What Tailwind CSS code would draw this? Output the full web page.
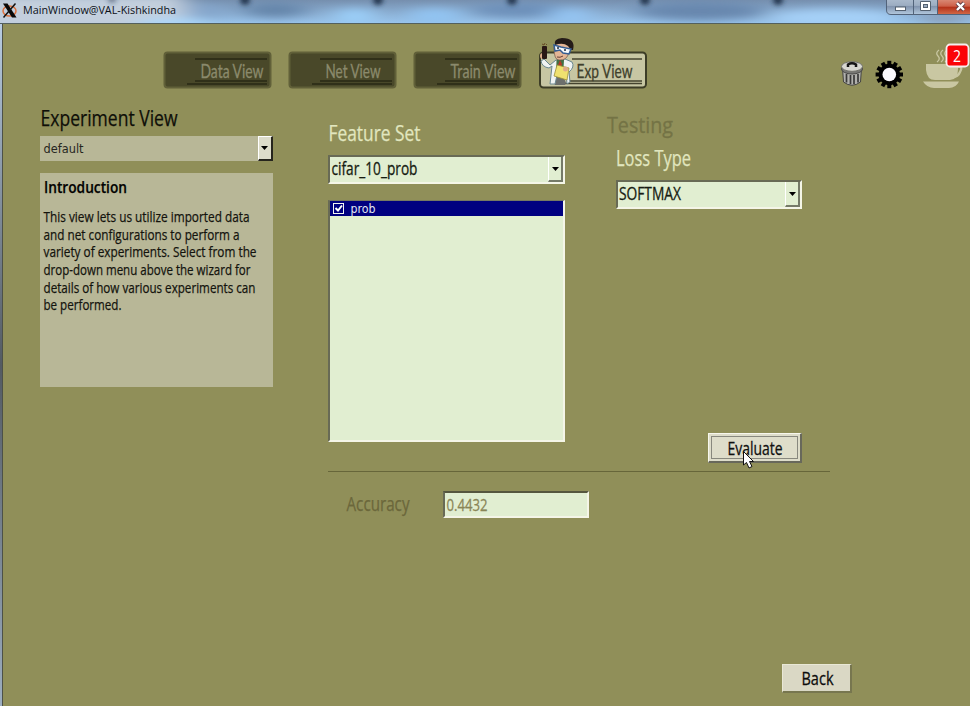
<!DOCTYPE html>
<html lang="en">
<head>
<meta charset="utf-8">
<title>MainWindow@VAL-Kishkindha</title>
<script src="https://cdn.jsdelivr.net/npm/@tailwindcss/browser@4"></script>
</head>
<body class="w-[970px] h-[706px] overflow-hidden">
<div class="flex flex-col w-[970px] h-[706px] overflow-hidden bg-[#908f59] font-['Open_Sans',sans-serif]">
  <!-- title bar -->
  <header class="relative flex justify-between h-[24px] shrink-0 overflow-hidden bg-linear-to-b from-[#768fae] to-[#9bc7ef]">
    <svg class="absolute inset-0" width="970" height="24">
      <defs><filter id="b" x="-50%" y="-100%" width="200%" height="300%"><feGaussianBlur stdDeviation="12 4"/></filter><filter id="s" x="-50%" y="-100%" width="200%" height="300%"><feGaussianBlur stdDeviation="2.5"/></filter></defs>
      <g filter="url(#b)">
        <rect x="-20" y="-5" width="205" height="34" fill="#c3cfdd"/>
        <ellipse cx="205" cy="12" rx="18" ry="8" fill="#84a5cb"/>
        <ellipse cx="175" cy="24" rx="40" ry="6" fill="#acd8fb"/>
        <ellipse cx="275" cy="10" rx="32" ry="7" fill="#6484a9"/>
        <ellipse cx="355" cy="16" rx="20" ry="8" fill="#9bd0fa"/>
        <ellipse cx="435" cy="16" rx="28" ry="8" fill="#92c4f2"/>
        <ellipse cx="520" cy="10" rx="50" ry="7" fill="#6c8fb9"/>
        <ellipse cx="570" cy="16" rx="22" ry="8" fill="#94c5f3"/>
        <ellipse cx="700" cy="11" rx="65" ry="9" fill="#6887ae"/>
        <ellipse cx="835" cy="18" rx="65" ry="9" fill="#a5d0f7"/>
        <ellipse cx="945" cy="19" rx="25" ry="4" fill="#8795ab"/>
      </g>
      <g filter="url(#s)" fill="#20344d"><circle cx="112" cy="-1" r="4" opacity=".5"/><circle cx="245" cy="0" r="5"/><circle cx="378" cy="0" r="5"/><circle cx="512" cy="0" r="5"/><circle cx="645" cy="0" r="5"/><circle cx="778" cy="0" r="5"/></g>
      <path d="M0 23.500H970" stroke="#53605e"/>
    </svg>
    <div class="relative flex">
      <svg width="20" height="22"><ellipse cx="9.500" cy="11" rx="6.500" ry="5" fill="none" stroke="#dc713d" stroke-width="1.500"/><path d="M3 3.500H7.500L16.500 17.500H12Z" fill="#090909"/><path d="M15.500 3.500L3.500 17.500" stroke="#111" stroke-width="1.500"/></svg>
      <svg width="180" height="22"><text x="3" y="14" font-size="11.500" fill="#0b1017" textLength="153" lengthAdjust="spacingAndGlyphs">MainWindow@VAL-Kishkindha</text></svg>
    </div>
    <svg class="relative" width="84" height="17">
      <defs><linearGradient id="g" x2="0" y2="1"><stop stop-color="#aebdcf"/><stop offset=".45" stop-color="#9cadc2"/><stop offset=".5" stop-color="#8193ad"/><stop offset="1" stop-color="#b3c9de"/></linearGradient><linearGradient id="r" x2="0" y2="1"><stop stop-color="#d88773"/><stop offset=".45" stop-color="#cd5f48"/><stop offset=".5" stop-color="#b32f18"/><stop offset="1" stop-color="#d06645"/></linearGradient></defs>
      <path d="M.5 -2V10Q.5 14.500 5 14.500H84V-2Z" fill="url(#g)" stroke="#52637a"/>
      <path d="M52 0H84V14H52Z" fill="url(#r)"/><path d="M27.500 0V14M51.500 0V14" stroke="#52637a"/>
      <rect x="9.500" y="7" width="10" height="3.500" fill="#fff" stroke="#53606f"/>
      <path d="M34.500 1.500H44.500V10.500H34.500Z" fill="#fff" stroke="#53606f"/><rect x="37.500" y="4.500" width="4" height="3" fill="#9aaabe" stroke="#53606f"/>
      <path d="M71 3L78 10M78 3L71 10" stroke="#5f3840" stroke-width="4"/><path d="M71 3L78 10M78 3L71 10" stroke="#fff" stroke-width="2.400"/>
    </svg>
  </header>

  <div class="flex flex-1 min-h-0">
    <div class="w-[3px] shrink-0 bg-linear-to-b from-[#b9cde3] via-[#535a62] to-[#9daec0] border-r border-[#4d5148]"></div>
    <div class="flex flex-col flex-1 min-w-0">
      <!-- view tabs -->
      <nav class="flex h-[72px] shrink-0 pl-[160px] pt-[14px] font-['Lato',sans-serif]">
        <svg class="mr-[15px] shrink-0" width="110" height="54"><rect x="1.500" y="14.500" width="106" height="35" rx="3" fill="#494829" stroke="#616039" stroke-width="2"/><path d="M32 21H104M32 43H104M24 46H104" stroke="#292815" stroke-width="1.500"/><text x="37.500" y="40" font-size="20" fill="#8b8a6c" stroke="#8b8a6c" stroke-width=".3" textLength="63" lengthAdjust="spacingAndGlyphs">Data View</text></svg>
        <svg class="mr-[15px] shrink-0" width="110" height="54"><rect x="1.500" y="14.500" width="106" height="35" rx="3" fill="#494829" stroke="#616039" stroke-width="2"/><path d="M32 21H104M32 43H104M24 46H104" stroke="#292815" stroke-width="1.500"/><text x="37.500" y="40" font-size="20" fill="#8b8a6c" stroke="#8b8a6c" stroke-width=".3" textLength="55" lengthAdjust="spacingAndGlyphs">Net View</text></svg>
        <svg class="mr-[15px] shrink-0" width="110" height="54"><rect x="1.500" y="14.500" width="106" height="35" rx="3" fill="#494829" stroke="#616039" stroke-width="2"/><path d="M32 21H104M32 43H104M24 46H104" stroke="#292815" stroke-width="1.500"/><text x="37.500" y="40" font-size="20" fill="#8b8a6c" stroke="#8b8a6c" stroke-width=".3" textLength="65" lengthAdjust="spacingAndGlyphs">Train View</text></svg>
        <svg class="shrink-0" width="112" height="54">
          <rect x="2" y="14.500" width="106" height="35" rx="3.500" fill="#c7c6a3" stroke="#3d3d27" stroke-width="2"/>
          <path d="M34 21H104M30 43H104M24 45.500H104" stroke="#44432e" stroke-width="1.400"/>
          <text x="38.500" y="40" font-size="20" fill="#403f2c" stroke="#403f2c" stroke-width=".3" textLength="56" lengthAdjust="spacingAndGlyphs">Exp View</text>
          <!-- scientist -->
          <path d="M16 45L20 37H25L28 45L27 47H17Z" fill="#6c6f6c"/>
          <path d="M18 22L12 27L6 21L3 23Q4 29 11 30L14 28L12 46H17L20 33L28 34L29 46L32 44L31 34Q37 29 34 24L27 21Z" fill="#f0f3f2" stroke="#6a8790" stroke-width="1"/>
          <path d="M18.500 22H26L25 38H18Z" fill="#427044"/><path d="M22 22L24 26L22 34L20 27Z" fill="#b33a27"/>
          <path d="M19 27L31 30L29 42L16 38Z" fill="#efe16f" stroke="#9a8f36" stroke-width=".8"/><circle cx="27.500" cy="31" r="2.500" fill="#e0ab88"/>
          <path d="M16 10Q16 22 21 22Q29 23 31 14L34 11L30 4L19 3Z" fill="#e4b595" stroke="#6f5342" stroke-width=".7"/>
          <path d="M17 7Q15 1 24 0Q38 0 35 12L33 12L30 8Q25 4 17 7Z" fill="#241b18"/>
          <path d="M16 7L23 9L33 11L31 16L25 15L22 12L17 13Z" fill="#f6f9fc" stroke="#355d92" stroke-width="1.500"/>
          <path d="M19 10H21M26 12H28" stroke="#202838" stroke-width="1.500"/><path d="M19 19Q22 20 25 18" fill="none" stroke="#664035"/>
          <circle cx="5" cy="18" r="3" fill="#deac88"/><rect x="4" y="8" width="5" height="13" rx="1" fill="#291714"/><path d="M4 6L6 7L7 5M8 7L9 6" stroke="#674a24" fill="none"/>
        </svg>
        <svg class="ml-[187px] shrink-0" width="30" height="54">
          <path d="M5.500 30L6.500 44Q15 50.500 23.500 44L24.500 30Z" fill="#b1b1ad" stroke="#444" stroke-width="1"/>
          <path d="M9.500 36V44.500M13.500 37V46M17 37V46M21 36V44.500" stroke="#393939" stroke-width="1.700"/>
          <ellipse cx="15" cy="31" rx="10.500" ry="5" fill="#777774" stroke="#484846"/><ellipse cx="15" cy="28.500" rx="10.500" ry="4.800" fill="#d8d8d1" stroke="#73736c"/>
          <path d="M11 29V26.500Q15 24 19 26.500V29" fill="none" stroke="#161616" stroke-width="2.500"/>
        </svg>
        <svg class="ml-[7px] shrink-0" width="32" height="54"><g transform="translate(15.300 36.500)"><g stroke="#000" stroke-width="4"><path d="M0 -13.700V13.700"/><path d="M0 -13.700V13.700" transform="rotate(30)"/><path d="M0 -13.700V13.700" transform="rotate(60)"/><path d="M0 -13.700V13.700" transform="rotate(90)"/><path d="M0 -13.700V13.700" transform="rotate(120)"/><path d="M0 -13.700V13.700" transform="rotate(150)"/></g><circle r="10.700" fill="#000"/><circle r="6.800" fill="#fbf9fd"/></g></svg>
        <svg class="ml-[14px] shrink-0" width="52" height="54"><g fill="none" stroke="#c9c7a2"><path d="M19 12Q15 15 18 18T17 24M23 12Q19 15 22 18T21 24M27 12Q23 15 26 18T25 24" stroke-width="1.300"/><path d="M36 29Q44 27 40 34Q38 39 33 39" stroke-width="2.300"/></g><path d="M6 26H38V31Q38 42 30 42H15Q7 42 6 32Z M3 43.500H39Q36 50 29 50H14Q7 50 3 43.500Z" fill="#c9c7a2"/>
          <rect x="26.500" y="6.500" width="22" height="22" rx="3.500" fill="#fb0307" stroke="#f5eeee" stroke-width="1.800"/><text x="33" y="23.500" font-size="17" fill="#fff" textLength="8" lengthAdjust="spacingAndGlyphs" font-family="Open Sans">2</text></svg>
      </nav>

      <main class="flex flex-1 min-h-0 pl-[37px]">
        <aside class="w-[233px] shrink-0">
          <svg width="233" height="40"><text x="0.500" y="30" font-size="22" fill="#0e0e08" stroke="#0e0e08" stroke-width=".25" textLength="137" lengthAdjust="spacingAndGlyphs">Experiment View</text></svg>
          <div class="flex justify-between h-[25px] bg-[#b8b797]">
            <svg width="100" height="25"><text x="3.500" y="16.500" font-family="DejaVu Sans" font-size="11.500" fill="#26261e" textLength="40" lengthAdjust="spacingAndGlyphs">default</text></svg>
            <div class="flex items-center justify-center w-[15px] h-[25px] bg-[#dddcca] border border-t-white border-l-white border-r-2 border-b-2 border-r-[#26251d] border-b-[#26251d]"><svg width="8" height="5"><path d="M0 0H7L3.500 4Z"/></svg></div>
          </div>
          <div class="mt-[12px] h-[214px] bg-[#b8b797]">
            <svg width="233" height="214" fill="#13130d" stroke="#13130d" stroke-width=".25">
              <text x="4" y="20" font-weight="600" font-size="17" fill="#000" textLength="83" lengthAdjust="spacingAndGlyphs">Introduction</text>
              <g font-size="15">
              <text x="3.500" y="49" textLength="206" lengthAdjust="spacingAndGlyphs">This view lets us utilize imported data</text>
              <text x="3.500" y="66.600" textLength="196" lengthAdjust="spacingAndGlyphs">and net configurations to perform a</text>
              <text x="3.500" y="84.200" textLength="213" lengthAdjust="spacingAndGlyphs">variety of experiments. Select from the</text>
              <text x="3.500" y="101.900" textLength="207" lengthAdjust="spacingAndGlyphs">drop-down menu above the wizard for</text>
              <text x="3.500" y="119.500" textLength="212" lengthAdjust="spacingAndGlyphs">details of how various experiments can</text>
              <text x="3.500" y="137.200" textLength="78" lengthAdjust="spacingAndGlyphs">be performed.</text></g>
            </svg>
          </div>
        </aside>

        <section class="flex flex-col ml-[55px] w-[524px]">
          <div class="flex h-[376px] border-b border-[#67663a] w-[502px] shrink-0">
            <div class="w-[237px] shrink-0">
              <svg width="237" height="58"><text x="0.500" y="44.800" font-size="21.500" fill="#e1e6bf" stroke="#e1e6bf" stroke-width=".25" textLength="92" lengthAdjust="spacingAndGlyphs">Feature Set</text></svg>
              <div class="mt-px flex justify-between h-[29px] bg-[#e1eed1] border-2 border-t-[#686a55] border-l-[#686a55] border-r-[#f4f5e7] border-b-[#f4f5e7]">
                <svg width="150" height="25"><text x="1.500" y="18" font-size="18" fill="#171c12" stroke="#171c12" stroke-width=".3" textLength="86" lengthAdjust="spacingAndGlyphs">cifar_10_prob</text></svg>
                <div class="flex items-center justify-center w-[15px] h-[25px] border-r-2 border-b-2 border-l border-l-white border-[#757a68]"><svg width="7" height="4"><path d="M0 0H7L3.500 4Z"/></svg></div>
              </div>
              <div class="mt-[16px] h-[242px] bg-[#e1eed1] border-2 border-t-[#777962] border-l-[#686a55] border-r-[#f4f5e7] border-b-[#f4f5e7] border-t">
                <div class="flex h-[15px] bg-[#000080]"><svg width="100" height="15"><rect x="3.500" y="2.500" width="10" height="10" fill="none" stroke="#f3f5f3"/><path d="M5.500 7L8 9.500L12 4.500" fill="none" stroke="#fff" stroke-width="2"/><text x="20.500" y="11.500" font-family="DejaVu Sans" font-size="11.500" fill="#e1e6f1" textLength="25" lengthAdjust="spacingAndGlyphs">prob</text></svg></div>
              </div>
            </div>
            <div class="ml-[41px] w-[196px] shrink-0 flex flex-col items-end">
              <svg class="shrink-0" width="196" height="83"><text x="1" y="37" font-size="22" fill="#747345" stroke="#747345" stroke-width=".3" textLength="66" lengthAdjust="spacingAndGlyphs">Testing</text><text x="10" y="69.500" font-size="21.500" fill="#e1e6bf" stroke="#e1e6bf" stroke-width=".25" textLength="75" lengthAdjust="spacingAndGlyphs">Loss Type</text></svg>
              <div class="mt-px flex shrink-0 justify-between w-[186px] h-[29px] bg-[#e1eed1] border-2 border-t-[#686a55] border-l-[#686a55] border-r-[#f4f5e7] border-b-[#f4f5e7]">
                <svg width="120" height="25"><text x="1" y="18" font-size="17.500" fill="#171c12" stroke="#171c12" stroke-width=".3" textLength="62" lengthAdjust="spacingAndGlyphs">SOFTMAX</text></svg>
                <div class="flex items-center justify-center w-[15px] h-[25px] border-r-2 border-b-2 border-l border-l-white border-[#757a68]"><svg width="7" height="4"><path d="M0 0H7L3.500 4Z"/></svg></div>
              </div>
              <button class="relative mt-[224px] shrink-0 w-[94px] h-[30px] bg-[#deddca] border border-t-[#f7f7ed] border-l-[#f7f7ed] border-r-2 border-b-2 border-r-[#68685b] border-b-[#68685b]">
                <svg class="block" width="91" height="27"><rect x="2.500" y="2.500" width="86" height="22" fill="none" stroke="#333" stroke-dasharray="1 1"/><text x="18.500" y="20.500" font-size="17.500" fill="#101010" stroke="#101010" stroke-width=".3" textLength="55" lengthAdjust="spacingAndGlyphs">Evaluate</text></svg>
                <svg class="absolute left-[33px] top-[16px]" width="14" height="22"><path d="M1.500 1.500V15L4.500 12.500L7 18L10 16.500L7.500 11.500H11.500Z" fill="#fff" stroke="#111"/></svg>
              </button>
            </div>
          </div>
          <div class="flex mt-[19px]">
            <svg width="115" height="28"><text x="18.500" y="20" font-size="19.500" fill="#6b673b" stroke="#6b673b" stroke-width=".25" textLength="63" lengthAdjust="spacingAndGlyphs">Accuracy</text></svg>
            <div class="w-[146px] h-[27px] bg-[#e1eed1] border-2 border-t-[#55563e] border-l-[#686a55] border-r-[#f4f5e7] border-b-[#f4f5e7]"><svg class="block" width="100" height="23"><text x="1.500" y="17.500" font-size="17" fill="#898556" stroke="#898556" stroke-width=".3" textLength="41" lengthAdjust="spacingAndGlyphs">0.4432</text></svg></div>
          </div>
          <button class="mt-[145px] self-end w-[70px] h-[29px] bg-[#dad8c5] border border-t-[#e9e8d6] border-l-[#e9e8d6] border-r-2 border-b-2 border-r-[#77764f] border-b-[#77764f]"><svg class="block" width="67" height="26"><text x="18.500" y="20" font-size="18.500" fill="#0c0c0c" stroke="#0c0c0c" stroke-width=".3" textLength="32" lengthAdjust="spacingAndGlyphs">Back</text></svg></button>
        </section>
      </main>
    </div>
  </div>
</div>
</body>
</html>
